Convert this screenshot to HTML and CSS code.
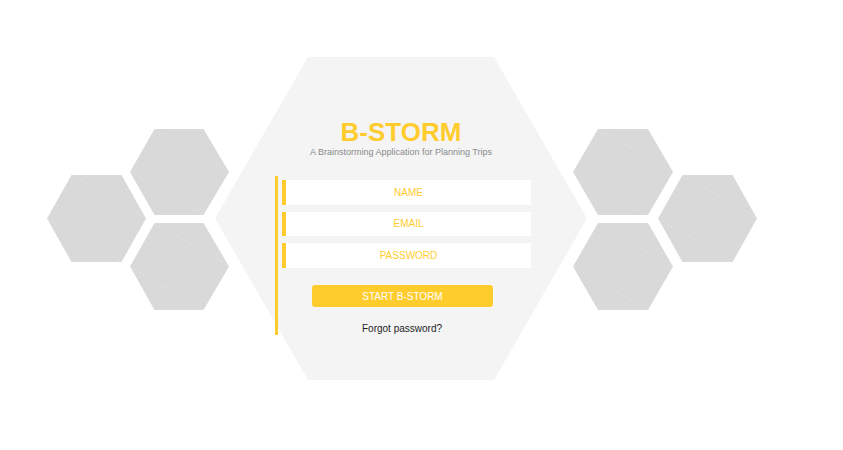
FILE: index.html
```html
<!DOCTYPE html>
<html lang="en">
<head>
<meta charset="utf-8">
<title>B-STORM</title>
<link rel="stylesheet" href="styles.css">
</head>
<body>
<div class="page">
  <svg class="hexes" width="843" height="450" viewBox="0 0 843 450" aria-hidden="true">
    <polygon class="hex-main" points="215,218.5 308,57 494,57 587,218.5 494,380 308,380"/>
    <g class="hex-small">
      <polygon points="130,172 154.5,129 203.5,129 229,172 203.5,215 154.5,215"/>
      <polygon points="47,218.5 71.5,175 121.5,175 146,218.5 121.5,262 71.5,262"/>
      <polygon points="130,266.5 154.5,223 203.5,223 229,266.5 203.5,310 154.5,310"/>
      <polygon points="573,172 598,129 648,129 673,172 648,215 598,215"/>
      <polygon points="658,218.5 682.5,175 732.5,175 757,218.5 732.5,262 682.5,262"/>
      <polygon points="573,266.5 598,223 648,223 673,266.5 648,310 598,310"/>
    </g>
    <g class="hex-lines">
      <line x1="154.5" y1="129" x2="229" y2="172"/><line x1="130" y1="172" x2="203.5" y2="215"/>
      <line x1="71.5" y1="175" x2="146" y2="218.5"/><line x1="47" y1="218.5" x2="121.5" y2="262"/>
      <line x1="154.5" y1="223" x2="229" y2="266.5"/><line x1="130" y1="266.5" x2="203.5" y2="310"/>
      <line x1="598" y1="129" x2="673" y2="172"/><line x1="573" y1="172" x2="648" y2="215"/>
      <line x1="682.5" y1="175" x2="757" y2="218.5"/><line x1="658" y1="218.5" x2="732.5" y2="262"/>
      <line x1="598" y1="223" x2="673" y2="266.5"/><line x1="573" y1="266.5" x2="648" y2="310"/>
    </g>
  </svg>
  <main class="panel">
    <h1 class="title">B-STORM</h1>
    <p class="subtitle">A Brainstorming Application for Planning Trips</p>
    <form class="form">
      <input class="field" type="text" placeholder="NAME">
      <input class="field" type="email" placeholder="EMAIL">
      <input class="field" type="password" placeholder="PASSWORD">
      <button class="submit" type="button">START B-STORM</button>
      <a class="forgot" href="#">Forgot password?</a>
    </form>
  </main>
</div>
</body>
</html>
```

FILE: styles.css
```css
html, body {
  margin: 0;
  padding: 0;
  background: #ffffff;
}

body {
  font-family: "Liberation Sans", Arial, sans-serif;
}

.page {
  display: grid;
  width: 843px;
  height: 450px;
  overflow: hidden;
}

.hexes {
  grid-area: 1 / 1;
  display: block;
}

.hex-main {
  fill: #f4f4f4;
}

.hex-small polygon {
  fill: #d9d9d9;
}

.hex-lines line {
  stroke: #e4e4e4;
  stroke-width: 0.7;
  stroke-dasharray: 3 2;
}

.panel {
  grid-area: 1 / 1;
  display: flex;
  flex-direction: column;
  align-items: center;
  padding: 118px 41px 0 0;
  z-index: 1;
}

.title {
  margin: 0;
  font-size: 26px;
  line-height: 28px;
  font-weight: 700;
  color: #ffcc2e;
}

.subtitle {
  margin: 0;
  font-size: 9px;
  line-height: 12px;
  color: #8a8a8a;
}

.form {
  display: flex;
  flex-direction: column;
  width: 249px;
  margin: 18px 0 0 4px;
  padding: 4px 0 0 4px;
  border-left: 3px solid #ffcc2e;
}

.field {
  box-sizing: border-box;
  height: 24.5px;
  margin: 0 0 7px 0;
  padding: 0;
  border: none;
  border-left: 4px solid #ffcc2e;
  background: #ffffff;
  font-family: "Liberation Sans", Arial, sans-serif;
  font-size: 10px;
  text-align: center;
  color: #ffcc2e;
  outline: none;
}

.field::placeholder {
  color: #ffcc2e;
  opacity: 1;
}

.submit {
  width: 181px;
  height: 22px;
  margin: 10.5px 0 0 30px;
  padding: 0;
  border: none;
  border-radius: 3px;
  background: #ffcc2e;
  color: #ffffff;
  font-family: "Liberation Sans", Arial, sans-serif;
  font-size: 10px;
}

.forgot {
  align-self: flex-start;
  margin: 16px 0 0 80px;
  font-size: 10px;
  line-height: 12px;
  color: #1e1e1e;
  text-decoration: none;
}
```
